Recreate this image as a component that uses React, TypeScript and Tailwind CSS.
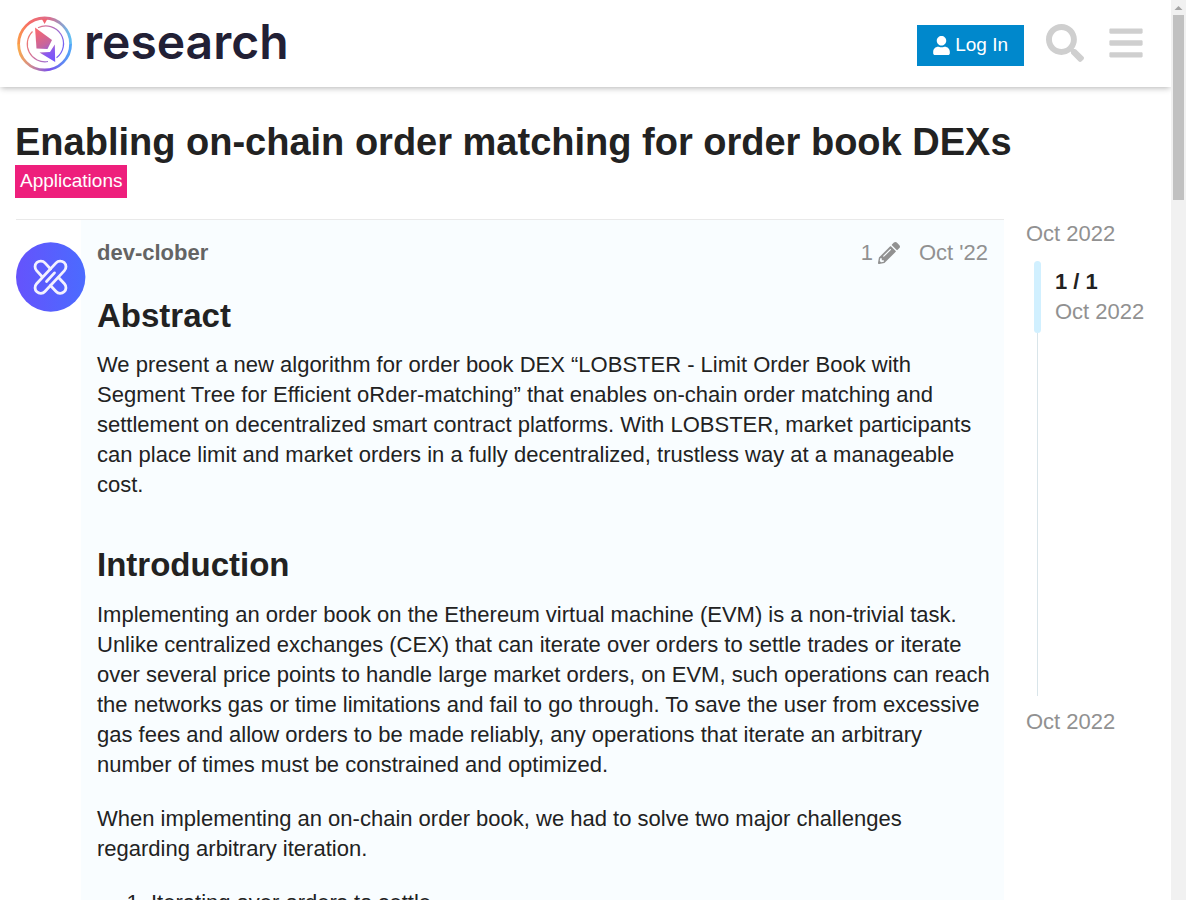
import { FaBars, FaPencilAlt, FaSearch, FaUser } from "react-icons/fa";

function RingLogo() {
  return (
    <svg viewBox="0 0 56 56" className="size-14 shrink-0" fill="none" aria-hidden="true">
      <defs>
        <linearGradient id="ringTop" x1="2" y1="28" x2="54" y2="28" gradientUnits="userSpaceOnUse">
          <stop offset="0" stopColor="#fb9a4b" />
          <stop offset="0.2" stopColor="#f76c66" />
          <stop offset="0.6" stopColor="#dc6c8c" />
          <stop offset="1" stopColor="#62bdf2" />
        </linearGradient>
        <linearGradient id="ringBottom" x1="2" y1="28" x2="54" y2="28" gradientUnits="userSpaceOnUse">
          <stop offset="0" stopColor="#fbaa4b" />
          <stop offset="0.25" stopColor="#cf8a92" />
          <stop offset="0.6" stopColor="#7a50ea" />
          <stop offset="1" stopColor="#52a4f8" />
        </linearGradient>
        <linearGradient id="gem" x1="20" y1="14" x2="38" y2="44" gradientUnits="userSpaceOnUse">
          <stop offset="0" stopColor="#f9686f" />
          <stop offset="0.5" stopColor="#c4649f" />
          <stop offset="0.75" stopColor="#8a5aef" />
          <stop offset="1" stopColor="#7455fb" />
        </linearGradient>
        <linearGradient id="inner" x1="10" y1="20" x2="46" y2="34" gradientUnits="userSpaceOnUse">
          <stop offset="0" stopColor="#f47a6a" />
          <stop offset="0.5" stopColor="#c272b0" />
          <stop offset="1" stopColor="#7462f4" />
        </linearGradient>
      </defs>
      <path d="M2.6 28a26 26 0 0 1 52 0" stroke="url(#ringTop)" strokeWidth="2.8" />
      <path d="M2.6 28a26 26 0 0 0 52 0" stroke="url(#ringBottom)" strokeWidth="2.8" />
      <path d="M25.800 3h5.600L28.600 8z" fill="#f2646f" />
      <path
        d="M22 11.700a17.700 17.700 0 0 1 18.500 30M16.500 15.500a17.700 17.700 0 0 0 15.500 30"
        stroke="url(#inner)"
        strokeWidth="1.200"
      />
      <path d="M19 11.500 36 24 31.500 33 20.500 32.500z" fill="url(#gem)" />
      <path d="M38.800 28.500 39.200 46 23.500 36.500 34 36z" fill="url(#gem)" />
    </svg>
  );
}

function Avatar() {
  return (
    <svg viewBox="0 0 70 70" className="relative size-[70px] shrink-0" fill="none" role="img" aria-label="dev-clober">
      <defs>
        <linearGradient id="avatarFill" x1="0" y1="35" x2="70" y2="35" gradientUnits="userSpaceOnUse">
          <stop offset="0" stopColor="#6553fc" />
          <stop offset="1" stopColor="#4b6bff" />
        </linearGradient>
      </defs>
      <circle cx="34.7" cy="35" r="34.7" fill="url(#avatarFill)" />
      <g stroke="#f3f1ff" strokeWidth="2.8" strokeLinecap="round">
        <rect x="-20" y="-5.700" width="40" height="11.400" rx="5.700" transform="translate(34.500 35.200) rotate(-47)" />
        <g transform="translate(34.500 35.200) rotate(47)">
          <path d="M-6-5.700h-8.300a5.700 5.700 0 0 0 0 11.400H-6" />
          <path d="M6-5.700h8.300a5.700 5.700 0 0 1 0 11.400H6" />
        </g>
        <path d="M30.500 39.500l8-8.600" />
      </g>
    </svg>
  );
}

function Header() {
  return (
    <header className="relative z-10 flex h-[87px] items-center justify-between bg-white pr-7 pl-4 shadow-[0_2px_6px_-1px_rgba(0,0,0,0.3)]">
      <a href="#home" className="flex items-center gap-3 text-[#222035]">
        <RingLogo />
        <span className="pb-1 font-[Inter,sans-serif] text-[48px] leading-[48px] font-semibold">research</span>
      </a>
      <div className="flex items-center pb-[2px]">
        <button type="button" className="mt-[6px] mr-[22px] flex h-[41px] items-center gap-[5px] bg-[#0088cc] px-4 text-[19px] text-white">
          <FaUser className="h-[19px] w-[17px]" aria-hidden="true" />
          Log In
        </button>
        <button type="button" aria-label="Search" className="mr-[25px] text-[#cfcfcf]">
          <FaSearch className="size-[38px]" />
        </button>
        <button type="button" aria-label="Menu" className="text-[#cfcfcf]">
          <FaBars className="h-[38px] w-[34px]" />
        </button>
      </div>
    </header>
  );
}

function Timeline() {
  return (
    <aside className="w-[167px] shrink-0 pl-[22px] text-[22px] leading-[30px] text-[#919191]">
      <a href="#first" className="block">Oct 2022</a>
      <div className="mt-3 mb-[11px] ml-2 h-[435px]">
        <div className="flex h-[72px] gap-[14px]">
          <div className="w-[7px] rounded-full bg-[#d1f0ff]" />
          <div className="pt-[6px]">
            <div className="font-bold text-[#222222]">1 / 1</div>
            <div>Oct 2022</div>
          </div>
        </div>
        <div className="ml-[3px] h-[363px] w-px bg-[#d9e5ea]" />
      </div>
      <a href="#last" className="block">Oct 2022</a>
    </aside>
  );
}

function Post() {
  return (
    <article className="flex min-w-0 flex-1 border-t border-[#e9e9e9]">
      <div className="flex w-[65px] shrink-0 pt-[22px]">
        <Avatar />
      </div>
      <div className="min-w-0 flex-1 bg-[#f9fdff] pt-[18px] pr-2 pl-4 text-[22px] leading-[30px]">
        <div className="flex items-center pr-2 text-[#919191]">
          <a href="#author" className="mr-auto font-bold text-[#646464]">dev-clober</a>
          <button type="button" aria-label="1 edit" className="mr-[19px] flex items-center gap-[5px]">
            1
            <FaPencilAlt className="size-[22px]" />
          </button>
          <a href="#date">Oct '22</a>
        </div>
        <h2 className="mt-7 text-[33px] leading-[40px] font-bold">Abstract</h2>
        <p className="mt-[14px]">
          We present a new algorithm for order book DEX “LOBSTER - Limit Order Book with Segment Tree for Efficient
          oRder-matching” that enables on-chain order matching and settlement on decentralized smart contract
          platforms. With LOBSTER, market participants can place limit and market orders in a fully decentralized,
          trustless way at a manageable cost.
        </p>
        <h2 className="mt-[45px] text-[33px] leading-[40px] font-bold">Introduction</h2>
        <p className="mt-[15px]">
          Implementing an order book on the Ethereum virtual machine (EVM) is a non-trivial task. Unlike centralized
          exchanges (CEX) that can iterate over orders to settle trades or iterate over several price points to handle
          large market orders, on EVM, such operations can reach the networks gas or time limitations and fail to go
          through. To save the user from excessive gas fees and allow orders to be made reliably, any operations that
          iterate an arbitrary number of times must be constrained and optimized.
        </p>
        <p className="mt-6">
          When implementing an on-chain order book, we had to solve two major challenges regarding arbitrary
          iteration.
        </p>
        <ol className="mt-6 list-decimal pl-[54px]">
          <li>Iterating over orders to settle</li>
        </ol>
      </div>
    </article>
  );
}

export default function App() {
  return (
    <div className="flex h-screen overflow-hidden bg-white font-['Liberation_Sans',Arial,sans-serif] text-[#222222]">
      <div className="min-w-0 flex-1 overflow-hidden">
        <Header />
        <main>
          <div className="px-[15px] pt-8">
            <h1 className="text-[38px] leading-[46px] font-bold">Enabling on-chain order matching for order book DEXs</h1>
            <a href="#applications" className="flex h-[33px] w-fit items-center bg-[#ee1f7c] px-[5px] text-[19px] text-white">
              Applications
            </a>
          </div>
          <div className="mt-[21px] flex pl-4">
            <Post />
            <Timeline />
          </div>
        </main>
      </div>
      <div className="flex w-[15px] shrink-0 flex-col items-center bg-[#f1f1f1]" aria-hidden="true">
        <svg viewBox="0 0 15 15" className="size-[15px]">
          <path d="M3.500 10 7.500 6l4 4z" fill="#a3a3a3" />
        </svg>
        <div className="h-[185px] w-[11px] bg-[#c1c1c1]" />
      </div>
    </div>
  );
}
